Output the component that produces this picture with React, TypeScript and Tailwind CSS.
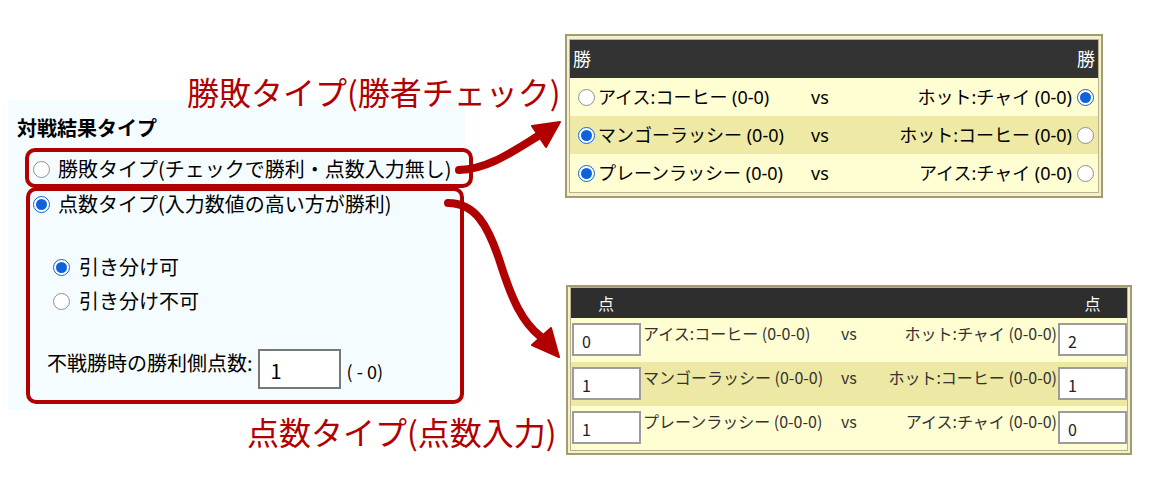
import React from 'react';

const RED = '#b00000';

function Radio({ checked }: { checked?: boolean }) {
  if (checked) {
    return (
      <span className="w-[17px] h-[17px] shrink-0 rounded-full border-[1.5px] border-[#1462d0] bg-white flex items-center justify-center">
        <span className="w-[11px] h-[11px] rounded-full bg-[#0f63da]" />
      </span>
    );
  }
  return <span className="block w-[17px] h-[17px] shrink-0 rounded-full border border-[#8f8f8f] bg-white" />;
}

const winRows = [
  { left: 'アイス:コーヒー (0-0)', right: 'ホット:チャイ (0-0)', win: 'right' },
  { left: 'マンゴーラッシー (0-0)', right: 'ホット:コーヒー (0-0)', win: 'left' },
  { left: 'プレーンラッシー (0-0)', right: 'アイス:チャイ (0-0)', win: 'left' },
];

const scoreRows = [
  { left: 'アイス:コーヒー (0-0-0)', right: 'ホット:チャイ (0-0-0)', a: '0', b: '2' },
  { left: 'マンゴーラッシー (0-0-0)', right: 'ホット:コーヒー (0-0-0)', a: '1', b: '1' },
  { left: 'プレーンラッシー (0-0-0)', right: 'アイス:チャイ (0-0-0)', a: '1', b: '0' },
];

function SettingsPanel() {
  return (
    <div className="ml-[8px] mt-[100px] w-[457px] h-[310px] bg-[#f5fcff] shrink-0 text-black">
      <div className="pl-[9px] pt-[16px] text-[20px] leading-[24px] font-bold">対戦結果タイプ</div>

      <div className="mt-[8px] ml-[17px] w-[448px] h-[40px] border-4 border-[#b00000] rounded-[10px] flex items-center pt-[2px] pl-[4px]">
        <Radio />
        <span className="ml-[8px] text-[20px] leading-[26px]">勝敗タイプ(チェックで勝利・点数入力無し)</span>
      </div>

      <div className="-mt-[1px] ml-[18px] w-[438px] h-[217px] border-4 border-[#b00000] rounded-[10px]">
        <div className="h-[26px] flex items-center pl-[3px]">
          <Radio checked />
          <span className="ml-[8px] text-[20px] leading-[26px]">点数タイプ(入力数値の高い方が勝利)</span>
        </div>
        <div className="mt-[37px] h-[26px] flex items-center pl-[23px]">
          <Radio checked />
          <span className="ml-[9px] text-[20px] leading-[26px]">引き分け可</span>
        </div>
        <div className="mt-[8px] h-[26px] flex items-center pl-[23px]">
          <Radio />
          <span className="ml-[9px] text-[20px] leading-[26px]">引き分け不可</span>
        </div>
        <div className="mt-[35px] flex items-start pl-[17px]">
          <span className="text-[20px] leading-[28px]">不戦勝時の勝利側点数:</span>
          <div className="ml-[5px] w-[83px] h-[40px] border-2 border-[#777] bg-white pl-[11px] pt-[6px] text-[20px] leading-[28px]">1</div>
          <span className="ml-[6px] mt-[10px] text-[18px] leading-[24px]">( - 0)</span>
        </div>
      </div>
    </div>
  );
}

function WinTable() {
  return (
    <div className="w-[538px] h-[164px] border-2 border-[#a39d6c] bg-[#f4f0d4] px-[2px] pt-[3px] pb-[3px] font-['Noto_Sans','Noto_Sans_CJK_JP',sans-serif]">
      <div className="border border-[#b8b286] bg-[#fffdd2]">
        <div className="h-[38px] bg-[#333] text-white text-[18px] flex items-center justify-between px-[3px]">
          <span>勝</span>
          <span>勝</span>
        </div>
        {winRows.map((r, i) => (
          <div key={i} className={`h-[38px] flex items-center text-[18px] ${i === 1 ? 'bg-[#eeeaa6]' : 'bg-[#fffdd2]'}`}>
            <div className="w-[241px] pl-[8px] flex items-center">
              <Radio checked={r.win === 'left'} />
              <span className="ml-[3px] whitespace-nowrap">{r.left}</span>
            </div>
            <span className="w-[19px]">vs</span>
            <span className="flex-1 text-right whitespace-nowrap">{r.right}</span>
            <span className="ml-[5px] mr-[4px] flex">
              <Radio checked={r.win === 'right'} />
            </span>
          </div>
        ))}
      </div>
    </div>
  );
}

function ScoreBox({ value }: { value: string }) {
  return (
    <div className="w-[69px] h-[33px] shrink-0 border-2 border-[#9c9c9c] bg-white pl-[8px] pt-[5px] text-[16px] leading-[22px] text-[#222]">
      {value}
    </div>
  );
}

function ScoreTable() {
  return (
    <div className="ml-[1px] w-[566px] h-[170px] border-2 border-[#a39d6c] bg-[#f4f0d4] px-[2px] pb-[3px]">
      <div className="border border-[#b8b286] bg-[#fffdd2]">
        <div className="h-[30px] bg-[#2e2e2e] text-white text-[16px] flex items-center justify-between">
          <span className="w-[70px] text-center">点</span>
          <span className="w-[69px] text-center">点</span>
        </div>
        {scoreRows.map((r, i) => (
          <div key={i} className={`h-[44px] flex items-start text-[16px] text-[#333] ${i === 1 ? 'bg-[#ede8a4]' : 'bg-[#fffdd2]'}`}>
            <div className="w-[270px] flex items-start">
              <div className="mt-[5px] ml-[1px]">
                <ScoreBox value={r.a} />
              </div>
              <span className="ml-[2px] pt-[4px] leading-[22px] whitespace-nowrap">{r.left}</span>
            </div>
            <span className="w-[20px] pt-[4px] leading-[22px]">vs</span>
            <span className="flex-1 text-right pt-[4px] leading-[22px] whitespace-nowrap">{r.right}</span>
            <div className="mt-[5px] ml-[1px]">
              <ScoreBox value={r.b} />
            </div>
          </div>
        ))}
      </div>
    </div>
  );
}

function Arrows() {
  return (
    <svg className="absolute left-0 top-0 pointer-events-none" width="1150" height="492" viewBox="0 0 1150 492">
      <path d="M459 170 C 488 169 512 152 538 136" fill="none" stroke={RED} strokeWidth="8" strokeLinecap="round" />
      <polygon points="560,122 532,126 546,147" fill={RED} stroke={RED} strokeWidth="2" strokeLinejoin="round" />
      <path d="M448 203 C 475 203 488 225 500 262 C 512 300 522 322 541 337" fill="none" stroke={RED} strokeWidth="8" strokeLinecap="round" />
      <polygon points="559,357 551,328 532,345" fill={RED} stroke={RED} strokeWidth="2" strokeLinejoin="round" />
    </svg>
  );
}

export default function App() {
  return (
    <div className="relative w-[1150px] h-[492px] bg-white overflow-hidden flex items-start font-['Noto_Sans_CJK_JP',sans-serif]">
      <SettingsPanel />
      <div className="ml-[100px] mt-[34px] flex flex-col">
        <WinTable />
        <div className="mt-[87px]">
          <ScoreTable />
        </div>
      </div>

      <div className="absolute left-[187px] top-[71px] text-[32px] leading-[40px] whitespace-nowrap" style={{ color: RED }}>
        勝敗タイプ(勝者チェック)
      </div>
      <div className="absolute left-[247px] top-[411px] text-[32px] leading-[40px] whitespace-nowrap" style={{ color: RED }}>
        点数タイプ(点数入力)
      </div>
      <Arrows />
    </div>
  );
}
